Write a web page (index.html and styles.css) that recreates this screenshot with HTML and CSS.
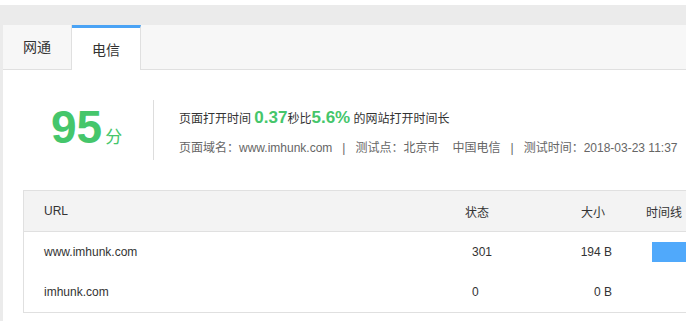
FILE: index.html
```html
<!DOCTYPE html>
<html lang="zh-CN">
<head>
<meta charset="utf-8">
<title>测速结果</title>
<link rel="stylesheet" href="styles.css">
</head>
<body>
<div class="topgap"></div>
<div class="graybar"></div>
<div class="main">
  <div class="tabs">
    <div class="tab">网通</div>
    <div class="tab active">电信</div>
  </div>
  <div class="summary">
    <div class="score"><span class="num">95</span><span class="unit">分</span></div>
    <div class="info">
      <div class="line1">页面打开时间 <b class="g">0.37</b>秒比<b class="g">5.6%</b> 的网站打开时间长</div>
      <div class="line2">页面域名：www.imhunk.com<span class="sep">|</span>测试点：北京市<span class="isp">中国电信</span><span class="sep">|</span>测试时间：2018-03-23 11:37</div>
    </div>
  </div>
  <div class="table">
    <div class="row head">
      <div class="c-url">URL</div>
      <div class="c-status">状态</div>
      <div class="c-size">大小</div>
      <div class="c-time">时间线</div>
    </div>
    <div class="row">
      <div class="c-url">www.imhunk.com</div>
      <div class="c-status">301</div>
      <div class="c-size">194 B</div>
      <div class="c-time"><div class="bar"></div></div>
    </div>
    <div class="row">
      <div class="c-url">imhunk.com</div>
      <div class="c-status">0</div>
      <div class="c-size">0 B</div>
      <div class="c-time"></div>
    </div>
  </div>
</div>
</body>
</html>
```

FILE: styles.css
```css
html, body {
  margin: 0;
  padding: 0;
  overflow: hidden;
  background: #fff;
}
body {
  font-family: "Liberation Sans", "Noto Sans CJK SC", sans-serif;
  color: #333;
  font-size: 12px;
}
.topgap {
  height: 5px;
  background: #fff;
}
.graybar {
  height: 20px;
  background: #ebebeb;
}
.main {
  border-left: 3px solid #ebebeb;
  height: 296px;
  overflow: hidden;
}
.tabs {
  display: flex;
  height: 44px;
  background: #f7f7f7;
  border-bottom: 1px solid #e0e0e0;
}
.tab {
  width: 68px;
  height: 44px;
  line-height: 44px;
  text-align: center;
  font-size: 14px;
  color: #333;
  border-right: 1px solid #e0e0e0;
}
.tab.active {
  box-sizing: border-box;
  height: 45px;
  width: 69px;
  background: #fff;
  border-top: 3px solid #4aa3f5;
}
.summary {
  display: flex;
  margin: 30px 0 30px 48px;
  height: 60px;
}
.score {
  width: 102px;
  font-size: 46px;
  line-height: 54px;
  white-space: nowrap;
}
.score .num {
  font-weight: bold;
  color: #45c66b;
}
.score .unit {
  font-size: 17px;
  color: #45c66b;
  margin-left: 3px;
}
.info {
  border-left: 1px solid #dddddd;
  padding: 6px 0 0 25px;
  white-space: nowrap;
  font-size: 12px;
  line-height: 24px;
}
.line1 {
  color: #333;
}
.line1 .g {
  color: #45c66b;
  font-size: 17px;
  font-weight: bold;
}
.line2 {
  color: #666;
  margin-top: 5px;
}
.sep {
  margin: 0 10px;
}
.isp {
  margin-left: 13px;
}
.table {
  margin-left: 20px;
  width: 740px;
  border: 1px solid #e0e0e0;
}
.row {
  display: grid;
  grid-template-columns: 416px 100px 80px 1fr;
  align-items: center;
  height: 40px;
  font-size: 12px;
  color: #333;
  white-space: nowrap;
}
.row.head {
  background: #f3f3f3;
  border-bottom: 1px solid #e0e0e0;
}
.c-url {
  padding-left: 20px;
}
.c-status {
  padding-left: 32px;
}
.head .c-status {
  padding-left: 25px;
}
.c-size {
  text-align: right;
  padding-right: 8px;
}
.head .c-size {
  padding-right: 15px;
}
.c-time {
  padding-left: 32px;
}
.head .c-time {
  padding-left: 26px;
}
.bar {
  width: 100px;
  height: 20px;
  background: #50a9fb;
}
```
